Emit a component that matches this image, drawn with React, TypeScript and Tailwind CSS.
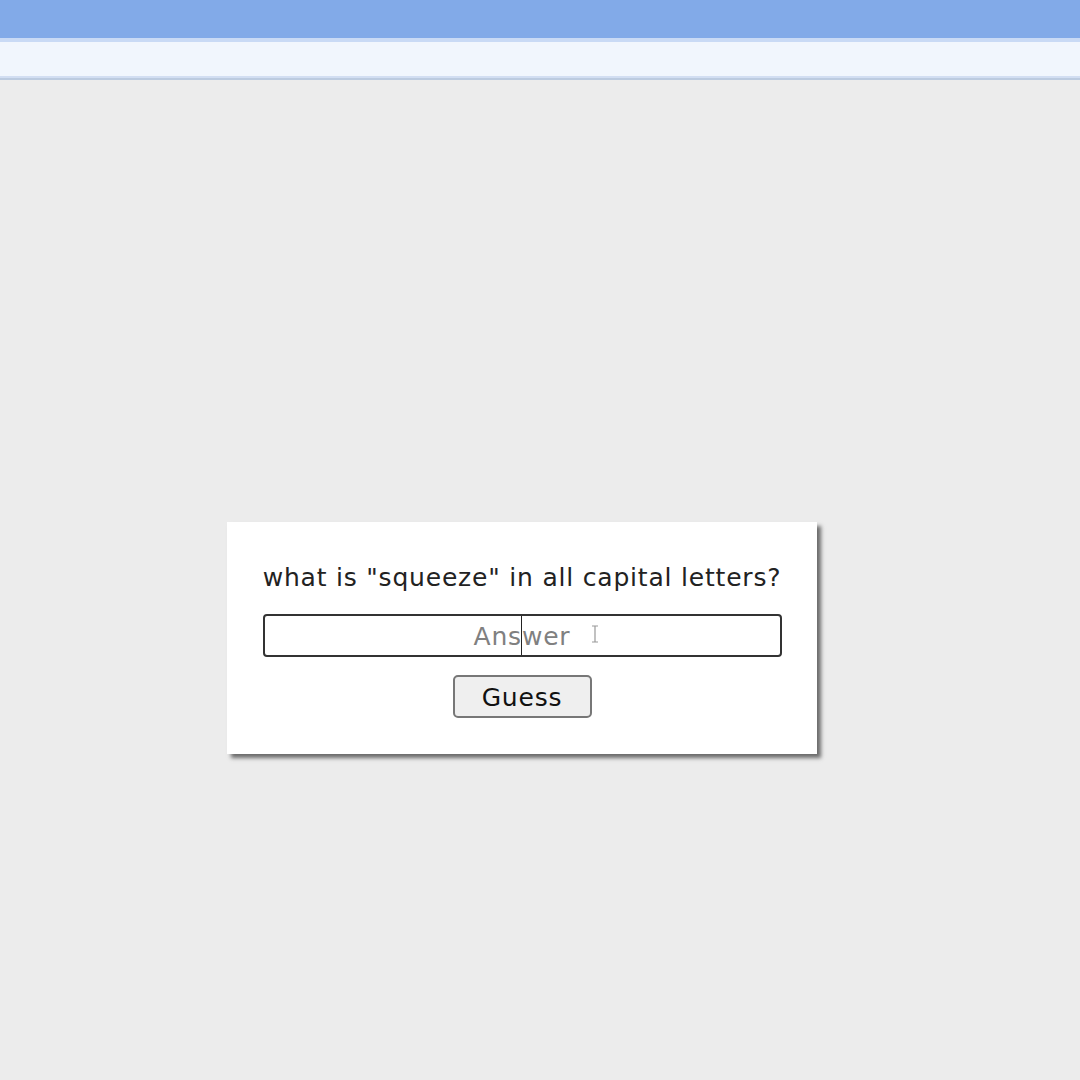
export default function App() {
  const font = { fontFamily: '"Comic Sans MS", "DejaVu Sans", sans-serif' }
  return (
    <div className="min-h-[1080px] w-[1080px] bg-[#ececec] flex flex-col" style={font}>
      {/* browser chrome */}
      <div className="h-[38px] bg-[#82aae8]" />
      <div className="h-[4px] bg-[#c9daf5]" />
      <div className="h-[34px] bg-[#f1f6fd]" />
      <div className="h-[2px] bg-[#d2def2]" />
      <div className="h-[2px] bg-[#bccbe0]" />

      <div className="pt-[442px] pl-[227px]">
        <div className="w-[590px] h-[232px] bg-white shadow-[4px_4px_4px_rgba(0,0,0,0.55)] flex flex-col items-center pt-[40px]">
          <p className="text-[25px] tracking-[0.8px] leading-[32px] text-[#222]">what is "squeeze" in all capital letters?</p>
          <div className="relative mt-[20px] w-[519px] h-[43px] border-2 border-[#333] rounded-[4px] flex items-center justify-center">
            <span className="text-[25px] tracking-[0.8px] text-[#808080] mt-[2px]">Answer</span>
            <div className="absolute left-[256px] top-0 bottom-0 w-px bg-[#222]" />
            <svg className="absolute left-[326px] top-[9px]" width="8" height="18" viewBox="0 0 8 18">
              <path d="M1 1h6M4 1v16M1 17h6" stroke="#999" strokeWidth="1.2" fill="none" />
            </svg>
          </div>
          <button className="mt-[18px] w-[139px] h-[43px] bg-[#efefef] border-2 border-[#777] rounded-[5px] text-[25px] tracking-[0.8px] text-[#111] flex items-center justify-center pt-[3px]">
            Guess
          </button>
        </div>
      </div>
    </div>
  )
}
